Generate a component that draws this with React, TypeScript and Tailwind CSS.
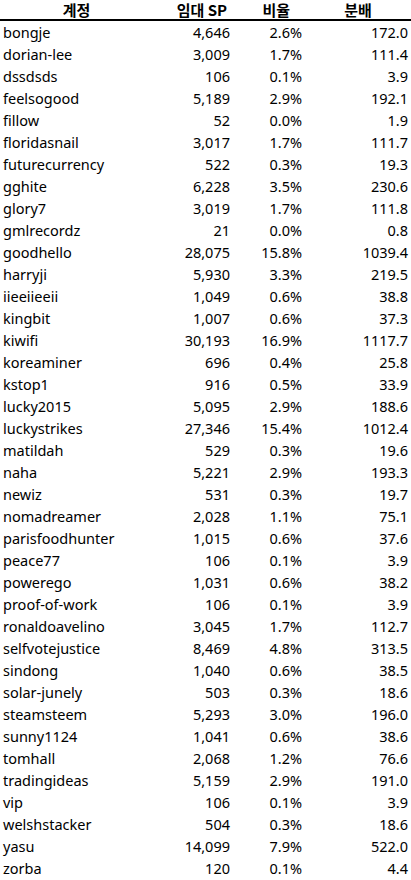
const rows: [string, string, string, string][] = [
  ["bongje", "4,646", "2.6%", "172.0"],
  ["dorian-lee", "3,009", "1.7%", "111.4"],
  ["dssdsds", "106", "0.1%", "3.9"],
  ["feelsogood", "5,189", "2.9%", "192.1"],
  ["fillow", "52", "0.0%", "1.9"],
  ["floridasnail", "3,017", "1.7%", "111.7"],
  ["futurecurrency", "522", "0.3%", "19.3"],
  ["gghite", "6,228", "3.5%", "230.6"],
  ["glory7", "3,019", "1.7%", "111.8"],
  ["gmlrecordz", "21", "0.0%", "0.8"],
  ["goodhello", "28,075", "15.8%", "1039.4"],
  ["harryji", "5,930", "3.3%", "219.5"],
  ["iieeiieeii", "1,049", "0.6%", "38.8"],
  ["kingbit", "1,007", "0.6%", "37.3"],
  ["kiwifi", "30,193", "16.9%", "1117.7"],
  ["koreaminer", "696", "0.4%", "25.8"],
  ["kstop1", "916", "0.5%", "33.9"],
  ["lucky2015", "5,095", "2.9%", "188.6"],
  ["luckystrikes", "27,346", "15.4%", "1012.4"],
  ["matildah", "529", "0.3%", "19.6"],
  ["naha", "5,221", "2.9%", "193.3"],
  ["newiz", "531", "0.3%", "19.7"],
  ["nomadreamer", "2,028", "1.1%", "75.1"],
  ["parisfoodhunter", "1,015", "0.6%", "37.6"],
  ["peace77", "106", "0.1%", "3.9"],
  ["powerego", "1,031", "0.6%", "38.2"],
  ["proof-of-work", "106", "0.1%", "3.9"],
  ["ronaldoavelino", "3,045", "1.7%", "112.7"],
  ["selfvotejustice", "8,469", "4.8%", "313.5"],
  ["sindong", "1,040", "0.6%", "38.5"],
  ["solar-junely", "503", "0.3%", "18.6"],
  ["steamsteem", "5,293", "3.0%", "196.0"],
  ["sunny1124", "1,041", "0.6%", "38.6"],
  ["tomhall", "2,068", "1.2%", "76.6"],
  ["tradingideas", "5,159", "2.9%", "191.0"],
  ["vip", "106", "0.1%", "3.9"],
  ["welshstacker", "504", "0.3%", "18.6"],
  ["yasu", "14,099", "7.9%", "522.0"],
  ["zorba", "120", "0.1%", "4.4"],
];

export default function App() {
  return (
    <div
      className="w-[411px] h-[880px] bg-white text-black overflow-hidden"
      style={{ fontFamily: '"Noto Sans", "Noto Sans CJK KR", sans-serif' }}
    >
      <div
        className="grid grid-cols-[153px_80px_72px_106px] h-[19px] items-center font-bold text-[15px] leading-[19px]"
        style={{ fontFamily: '"Noto Sans CJK KR", "Noto Sans", sans-serif' }}
      >
        <div className="text-center">계정</div>
        <div className="text-right pr-[6px]">임대 SP</div>
        <div className="text-right pr-[15px]">비율</div>
        <div className="text-center">분배</div>
      </div>
      <div className="h-[2px] bg-black" />
      <div className="flex flex-col text-[14.5px] leading-[22px]">
        {rows.map((r) => (
          <div key={r[0]} className="grid grid-cols-[153px_80px_72px_106px] h-[22px]">
            <div className="pl-[3px]">{r[0]}</div>
            <div className="text-right pr-[3px]">{r[1]}</div>
            <div className="text-right pr-[3px]">{r[2]}</div>
            <div className="text-right pr-[3px]">{r[3]}</div>
          </div>
        ))}
      </div>
    </div>
  );
}
